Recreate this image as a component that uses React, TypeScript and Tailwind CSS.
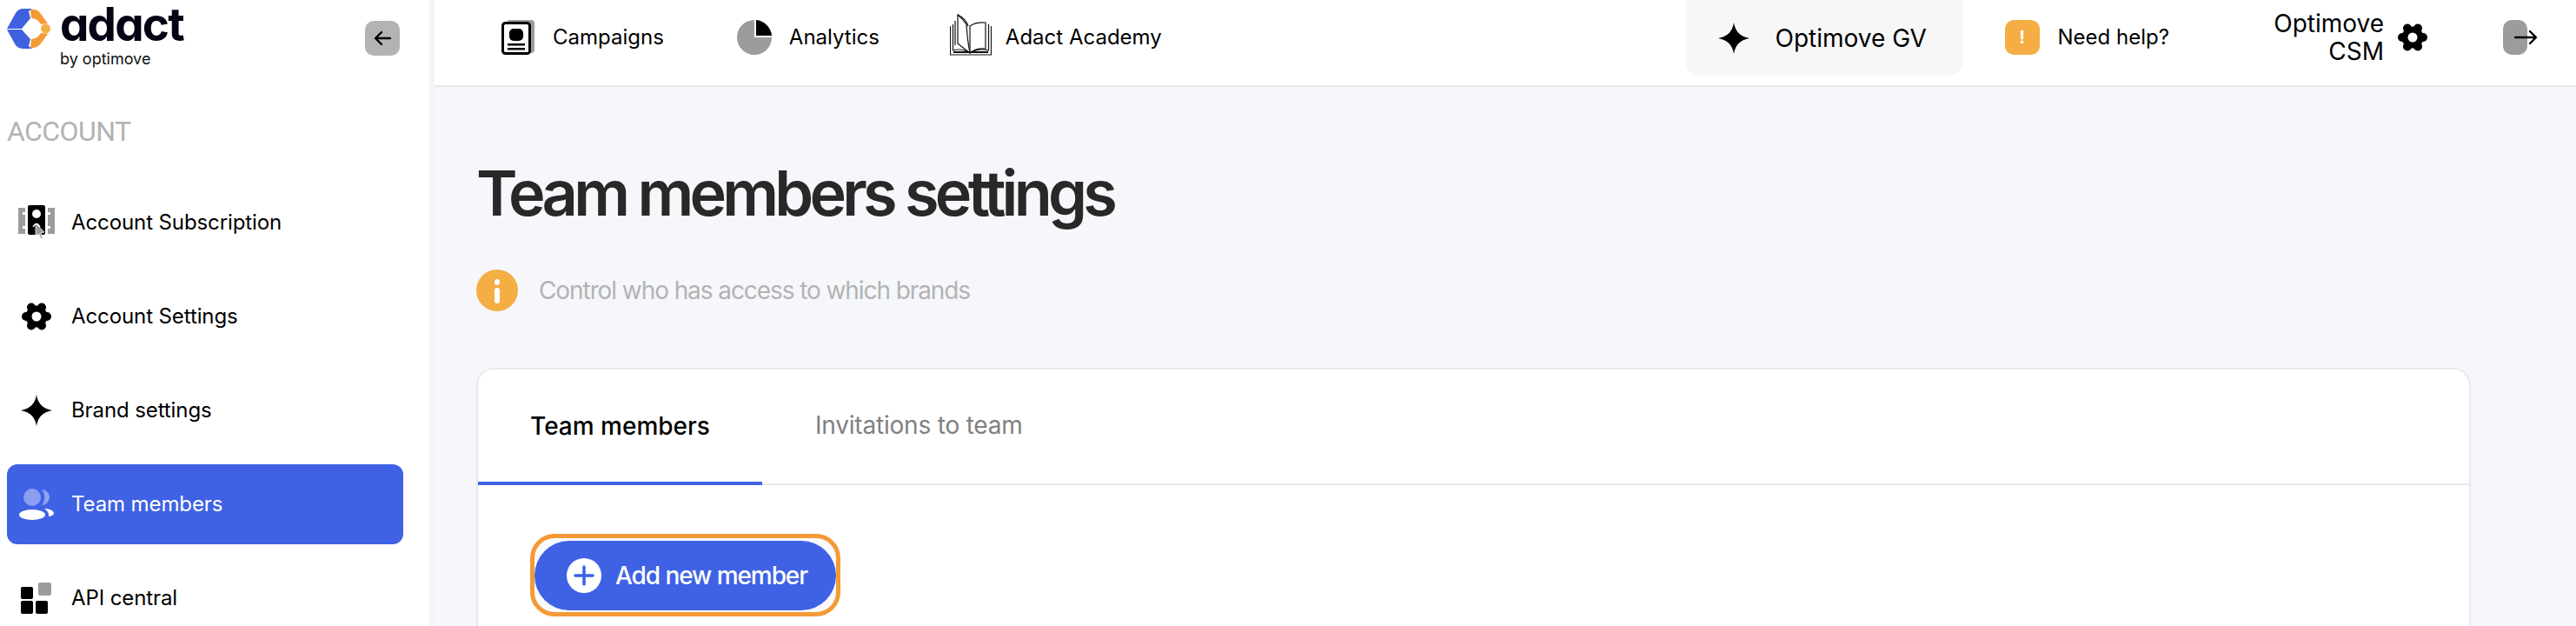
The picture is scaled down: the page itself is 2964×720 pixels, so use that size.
import React from 'react';

const Gear = ({ className = '', size = 34 }: { className?: string; size?: number }) => (
  <svg width={size} height={size} viewBox="0 0 34 34" className={className}>
    <circle cx="17" cy="17" r="12.5" fill="#000" />
    {[0, 60, 120, 180, 240, 300].map((a) => (
      <circle key={a} cx={17 + 12 * Math.cos((a * Math.PI) / 180)} cy={17 + 12 * Math.sin((a * Math.PI) / 180)} r="5" fill="#000" />
    ))}
    <circle cx="17" cy="17" r="5.5" fill="#fff" />
  </svg>
);

const Star = ({ size = 36 }: { size?: number }) => (
  <svg width={size} height={size} viewBox="0 0 36 36">
    <path d="M18 0 C19.5 10 25 16 36 18 C25 20 19.5 26 18 36 C16.5 26 11 20 0 18 C11 16 16.5 10 18 0 Z" fill="#000" />
  </svg>
);

const SubscriptionIcon = () => (
  <svg width="44" height="40" viewBox="0 0 44 40">
    <path d="M1 3 H9 V8 H6 V11 H9 V24 H6 V27 H9 V33 H1 Z" fill="#9c9c9c" />
    <path d="M43 3 H35 V8 H38 V11 H35 V24 H38 V27 H35 V33 H43 Z" fill="#9c9c9c" />
    <rect x="12" y="0" width="20" height="34" rx="2" fill="#000" />
    <circle cx="22" cy="10" r="5" fill="#fff" />
    <path d="M18 25 Q22 18 26 25" stroke="#fff" strokeWidth="1.5" fill="none" />
    <path d="M21 21 L31 31 L27 32 L29 38 L27 39 L25 33 L21 35 Z" fill="#9c9c9c" stroke="#fff" strokeWidth="0.8" />
  </svg>
);

const TeamIcon = () => (
  <svg width="44" height="40" viewBox="0 0 44 40">
    <path d="M28 3 A9 9 0 0 1 28 21 A14 14 0 0 0 28 3 Z" fill="#8ea3f0" />
    <circle cx="17" cy="12" r="10" fill="#8b9ff0" />
    <path d="M31 25 Q40 25 42 30 Q42 33 36 34 Q37 29 31 25 Z" fill="#fff" />
    <ellipse cx="17" cy="32" rx="15" ry="6" fill="#fff" />
  </svg>
);

const ApiIcon = () => (
  <svg width="44" height="40" viewBox="0 0 44 40">
    <rect x="24" y="2" width="15" height="15" rx="2" fill="#9c9c9c" />
    <rect x="4" y="7" width="14" height="14" rx="2" fill="#000" />
    <rect x="4" y="23" width="14" height="15" rx="2" fill="#000" />
    <rect x="21" y="23" width="14" height="15" rx="2" fill="#000" />
  </svg>
);

const BookIcon = () => (
  <svg width="48" height="48" viewBox="0 0 48 48" fill="none" stroke="#111" strokeWidth="1.2">
    <path d="M0.5 14 V47 H47.5 V14" />
    <path d="M3.5 12 V42 Q14 39 23 45 Q33 39 44.5 42 V12" />
    <path d="M23 45 V14 Q30 9 41 10 V40 Q30 39 23 45" />
    <path d="M23 45 Q20 30 19 12 Q15 6 9 1 V34 Q14 38 23 45" />
    <path d="M9 1 Q18 5 21 14 M6 8 V36" />
    <path d="M4 44 H44" strokeWidth="2" />
  </svg>
);

const PieIcon = () => (
  <svg width="40" height="40" viewBox="0 0 40 40">
    <path d="M20 0 V20 H40 A20 20 0 1 1 20 0 Z" fill="#9c9c9c" />
    <path d="M22 0 A20 20 0 0 1 40 18 H22 Z" fill="#000" />
  </svg>
);

const CampaignIcon = () => (
  <svg width="38" height="40" viewBox="0 0 38 40">
    <rect x="6" y="0" width="32" height="38" rx="4" fill="#9c9c9c" />
    <rect x="1.5" y="3.5" width="31" height="35" rx="3" fill="#fff" stroke="#000" strokeWidth="3" />
    <rect x="9" y="10" width="16" height="14" rx="5" fill="#000" />
    <rect x="7" y="27" width="20" height="2.5" fill="#000" />
    <rect x="7" y="32" width="20" height="2.5" fill="#000" />
  </svg>
);

const Logo = () => (
  <svg width="50" height="46" viewBox="8 10 50 46">
    <path d="M8 33 L18 15 Q21 10 27 10 H37 L33 13 L35 21 L25 33 Z" fill="#4061DD" />
    <path d="M8 34 L18 52 Q21 56 27 56 H37 L33 53 L35 45 L25 34 Z" fill="#4061DD" />
    <path d="M35 11 Q43 10 47 16 L55 27 L47 28 Q43 21 36 21 Z" fill="#F49A37" />
    <path d="M35 55 Q43 56 47 50 L55 39 L47 38 Q43 45 36 45 Z" fill="#F49A37" />
    <circle cx="52.5" cy="33" r="5.5" fill="#F4AE44" />
  </svg>
);

const navItems = [
  { label: 'Account Subscription', icon: <SubscriptionIcon /> },
  { label: 'Account Settings', icon: <div className="pl-[5px] pt-[3px]"><Gear /></div> },
  { label: 'Brand settings', icon: <div className="pl-[4px] pt-[2px]"><Star /></div> },
  { label: 'Team members', icon: <TeamIcon />, active: true },
  { label: 'API central', icon: <ApiIcon /> },
];

export default function App() {
  return (
    <div className="flex h-[720px] w-[2964px] overflow-hidden bg-[#f5f7fb] font-['Inter',sans-serif] text-black">
      {/* Sidebar */}
      <aside className="flex w-[500px] shrink-0 flex-col border-r-[6px] border-[#f4f4f6] bg-white">
        <div className="flex h-[131px] shrink-0 items-start">
          <div className="ml-[8px] mt-[10px]"><Logo /></div>
          <div className="ml-[11px] mt-[3px] flex flex-col">
            <span className="text-[53px] font-bold leading-[50px] tracking-[-1.8px] text-[#050314] [font-feature-settings:'cv11']">adact</span>
            <span className="mt-[4px] text-[18px] leading-[22px] text-[#111] [font-feature-settings:'cv11']">by optimove</span>
          </div>
          <button className="ml-auto mr-[34px] mt-[24px] flex h-[40px] w-[40px] items-center justify-center rounded-[10px] bg-[#b3b3b3]">
            <svg width="20" height="18" viewBox="0 0 20 18" fill="none" stroke="#000" strokeWidth="2.4" strokeLinecap="round" strokeLinejoin="round">
              <path d="M19 9 H2 M9 2 L2 9 L9 16" />
            </svg>
          </button>
        </div>
        <div className="pl-[8px] font-['Roboto',sans-serif] text-[32px] font-normal leading-[40px] tracking-[-0.6px] text-[#b3b3b3]">ACCOUNT</div>
        <nav className="mt-[39px] flex flex-col gap-[16px] pl-[8px] pr-[30px]">
          {navItems.map((item) => (
            <div
              key={item.label}
              className={`flex h-[92px] items-center gap-[18px] rounded-[12px] pl-[12px] text-[24px] tracking-[-0.1px] ${item.active ? 'bg-[#3f62e5] text-white' : 'text-black'}`}
            >
              <div className="h-[40px] w-[44px] shrink-0">{item.icon}</div>
              <span>{item.label}</span>
            </div>
          ))}
        </nav>
      </aside>

      <div className="flex min-w-0 flex-1 flex-col">
        {/* Top bar */}
        <header className="flex h-[100px] shrink-0 items-center border-b-2 border-[#e9e9eb] bg-white pb-[12px] pl-[77px] text-[24px]">
          <div className="flex items-center gap-[21px]">
            <CampaignIcon />
            <span>Campaigns</span>
          </div>
          <div className="ml-[84px] flex items-center gap-[20px]">
            <PieIcon />
            <span>Analytics</span>
          </div>
          <div className="ml-[81px] flex items-center gap-[16px]">
            <div className="mt-[-7px]"><BookIcon /></div>
            <span>Adact Academy</span>
          </div>
          <div className="ml-auto flex h-[98px] items-start self-start">
            <div className="flex h-[87px] w-[319px] items-center gap-[30px] rounded-b-[16px] bg-[#f7f7f8] pl-[37px] text-[28px]">
              <Star />
              <span>Optimove GV</span>
            </div>
            <div className="ml-[48px] mt-[23px] flex h-[40px] items-center gap-[21px]">
              <div className="flex h-[40px] w-[40px] items-center justify-center rounded-[10px] bg-[#f4ae44] text-[20px] font-bold leading-none text-white">!</div>
              <span>Need help?</span>
            </div>
            <div className="ml-[117px] mt-[11px] flex h-[64px] items-center gap-[16px]">
              <span className="w-[130px] text-right text-[28px] leading-[32px]">Optimove CSM</span>
              <Gear />
            </div>
            <div className="relative ml-[87px] mr-[56px] mt-[23px] h-[40px] w-[28px] rounded-[10px] bg-[#9c9c9c]">
              <svg className="absolute left-[13px] top-[11px]" width="27" height="18" viewBox="0 0 27 18" fill="none" stroke="#000" strokeWidth="2.4" strokeLinecap="round" strokeLinejoin="round">
                <path d="M1 9 H25 M18 2 L25 9 L18 16" />
              </svg>
            </div>
          </div>
        </header>

        {/* Content */}
        <main className="flex min-h-0 flex-1 flex-col pl-[48px] pr-[121px]">
          <h1 className="mt-[78px] text-[72px] font-semibold leading-[88px] tracking-[-4.8px] text-[#282828]">Team members settings</h1>
          <div className="mt-[44px] flex h-[48px] items-center gap-[24px]">
            <div className="relative h-[48px] w-[48px] rounded-full bg-[#f4ae44]">
              <span className="absolute left-[21px] top-[11px] h-[7px] w-[6px] rounded-full bg-white" />
              <span className="absolute left-[21px] top-[21px] h-[18px] w-[6px] rounded-full bg-white" />
            </div>
            <span className="text-[28px] tracking-[-1.08px] text-[#b3b3b3]">Control who has access to which brands</span>
          </div>
          <section className="mt-[65px] flex-1 rounded-t-[20px] border-2 border-b-0 border-[#e9e9eb] bg-white">
            <div className="flex h-[133px] border-b-2 border-[#e9e9eb] text-[28px]">
              <div className="flex h-[133px] w-[327px] items-center justify-center border-b-4 border-[#3f62e5] font-medium">Team members</div>
              <div className="flex items-center pl-[61px] pb-[4px] tracking-[-0.2px] text-[#808080]">Invitations to team</div>
            </div>
            <div className="pl-[60px] pt-[56px]">
              <div className="inline-flex h-[95px] w-[357px] items-center justify-center rounded-[28px] border-[5px] border-[#f49a37] bg-[#fafafc]">
                <button className="flex h-[80px] w-[347px] items-center gap-[16px] rounded-[40px] bg-[#3f62e5] pl-[37px] text-[28px] font-medium tracking-[-1.07px] text-white">
                  <svg width="40" height="40" viewBox="0 0 40 40">
                    <circle cx="20" cy="20" r="20" fill="#fff" />
                    <path d="M20 10 V30 M10 20 H30" stroke="#3f62e5" strokeWidth="3.5" strokeLinecap="round" />
                  </svg>
                  <span>Add new member</span>
                </button>
              </div>
            </div>
          </section>
        </main>
      </div>
    </div>
  );
}
